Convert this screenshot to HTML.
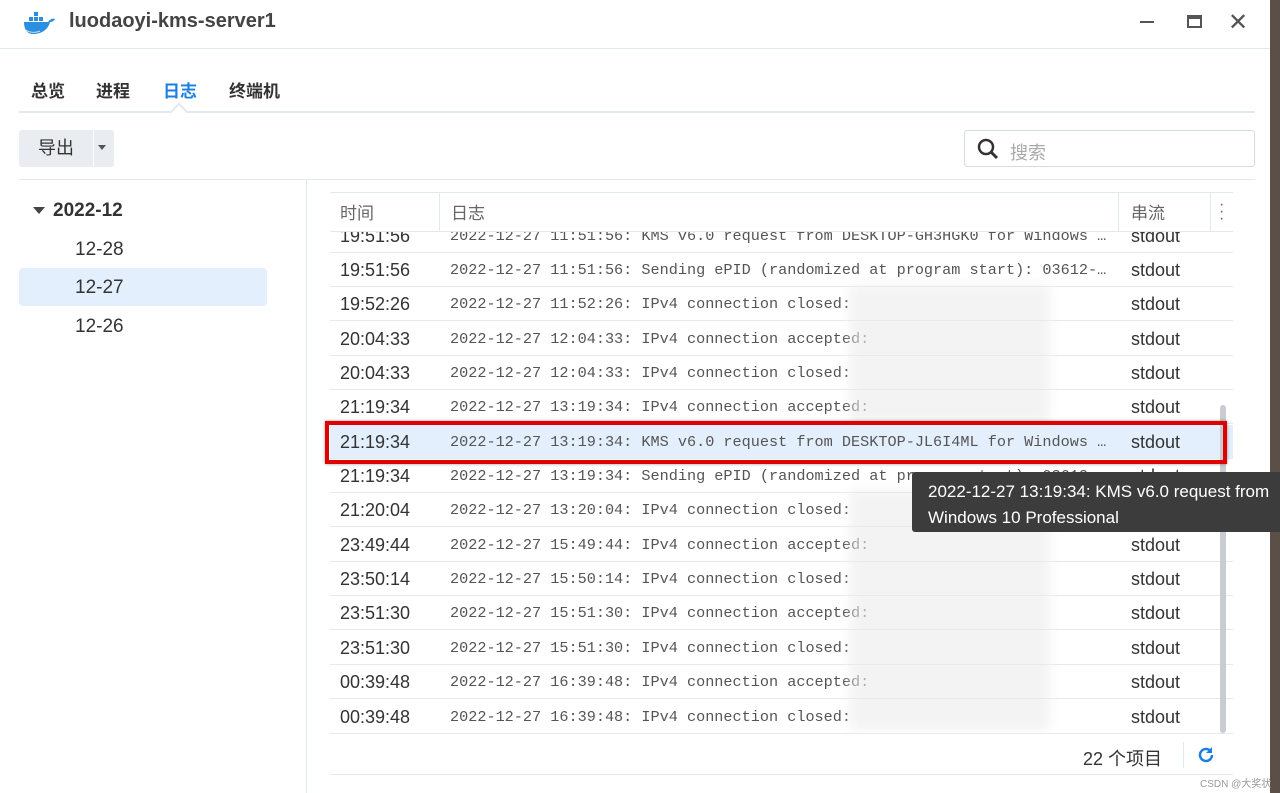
<!DOCTYPE html>
<html><head><meta charset="utf-8"><style>
*{margin:0;padding:0;box-sizing:border-box}
body{width:1280px;height:793px;overflow:hidden;background:#fff;font-family:"Liberation Sans","Noto Sans CJK SC",sans-serif;position:relative}
.abs{position:absolute}
.row{position:absolute;left:330px;width:903px;height:34px;border-bottom:1px solid #e6e9ee}
.row .tm{position:absolute;left:10px;top:7px;font-size:18px;color:#333}
.row .lg{position:absolute;left:120px;top:8px;font-family:"Liberation Mono","Noto Serif CJK SC",monospace;font-size:15.2px;color:#555;white-space:nowrap}
.row .so{position:absolute;left:801px;top:7px;font-size:18px;color:#333}
.blur{position:absolute;background:#ececec;filter:blur(5px);opacity:.6}
</style></head><body>
<div class="abs" style="right:0;top:0;width:10px;height:793px;background:#5a5048"></div>
<svg class="abs" style="left:22px;top:10px" width="34" height="26" viewBox="0 0 34 26"><path d="M2 12h24c2-3 5-4 7-3-1 2-3 3-5 3-2 8-9 12-17 12C5 24 2 19 2 12z" fill="#2a8fe0"/><rect x="7" y="7" width="4" height="4" fill="#2a8fe0"/><rect x="12" y="7" width="4" height="4" fill="#2a8fe0"/><rect x="17" y="7" width="4" height="4" fill="#2a8fe0"/><rect x="12" y="2" width="4" height="4" fill="#2a8fe0"/><path d="M4 20c4 3 10 3 14 1" stroke="#cde" fill="none"/></svg>
<div class="abs" style="left:69px;top:10px;font-size:20px;font-weight:bold;color:#444">luodaoyi-kms-server1</div>
<div class="abs" style="left:1140px;top:21px;width:14px;height:2px;background:#555"></div>
<div class="abs" style="left:1187px;top:15px;width:15px;height:13px;border:2px solid #555;border-top-width:4px"></div>
<div class="abs" style="left:1228px;top:8px;font-size:24px;color:#555">✕</div>
<div class="abs" style="left:0;top:48px;width:1270px;height:1px;background:#e3e8ee"></div>
<div class="abs" style="left:31px;top:77px;font-size:17px;font-weight:bold;color:#333">总览</div>
<div class="abs" style="left:96px;top:77px;font-size:17px;font-weight:bold;color:#333">进程</div>
<div class="abs" style="left:163px;top:77px;font-size:17px;font-weight:bold;color:#1a7fe0">日志</div>
<div class="abs" style="left:229px;top:77px;font-size:17px;font-weight:bold;color:#333">终端机</div>
<div class="abs" style="left:19px;top:111px;width:1236px;height:2px;background:#e3e8ee"></div>
<div class="abs" style="left:173px;top:105px;width:12px;height:12px;background:#fff;border-left:2px solid #e3e8ee;border-top:2px solid #e3e8ee;transform:rotate(45deg)"></div>
<div class="abs" style="left:19px;top:130px;width:74px;height:37px;background:#e9edf2;border-radius:3px 0 0 3px;font-size:18px;color:#333;text-align:center;line-height:37px">导出</div>
<div class="abs" style="left:94px;top:130px;width:20px;height:37px;background:#e9edf2;border-radius:0 3px 3px 0"></div>
<div class="abs" style="left:98px;top:145px;border:4px solid transparent;border-top:5px solid #555"></div>
<div class="abs" style="left:964px;top:130px;width:291px;height:37px;border:1px solid #d5dbe2;border-radius:3px"></div>
<svg class="abs" style="left:977px;top:138px" width="22" height="22"><circle cx="9" cy="9" r="7" stroke="#333" stroke-width="2.5" fill="none"/><path d="M14 14l6 6" stroke="#333" stroke-width="3"/></svg>
<div class="abs" style="left:1010px;top:139px;font-size:18px;color:#aaa">搜索</div>
<div class="abs" style="left:19px;top:179px;width:1236px;height:1px;background:#e3e8ee"></div>
<div class="abs" style="left:306px;top:180px;width:1px;height:613px;background:#e3e8ee"></div>
<div class="abs" style="left:33px;top:207px;border:6px solid transparent;border-top:7px solid #444"></div>
<div class="abs" style="left:53px;top:200px;font-size:19px;font-weight:bold;color:#333">2022-12</div>
<div class="abs" style="left:75px;top:239px;font-size:19px;color:#333">12-28</div>
<div class="abs" style="left:19px;top:268px;width:248px;height:38px;background:#e3effc;border-radius:4px"></div>
<div class="abs" style="left:75px;top:277px;font-size:19px;color:#333">12-27</div>
<div class="abs" style="left:75px;top:316px;font-size:19px;color:#333">12-26</div>
<div class="abs" style="left:330px;top:192px;width:903px;height:1px;background:#e3e8ee"></div>
<div class="abs" style="left:330px;top:232px;width:903px;height:503px;overflow:hidden">
<div style="position:absolute;left:-330px;top:-232px;width:1280px;height:800px">
<div class="row" style="top:219px"><span class="tm">19:51:56</span><span class="lg">2022-12-27 11:51:56: KMS v6.0 request from DESKTOP-GH3HGK0 for Windows …</span><span class="so">stdout</span></div>
<div class="row" style="top:253px"><span class="tm">19:51:56</span><span class="lg">2022-12-27 11:51:56: Sending ePID (randomized at program start): 03612-…</span><span class="so">stdout</span></div>
<div class="row" style="top:287px"><span class="tm">19:52:26</span><span class="lg">2022-12-27 11:52:26: IPv4 connection closed:</span><span class="so">stdout</span></div>
<div class="row" style="top:322px"><span class="tm">20:04:33</span><span class="lg">2022-12-27 12:04:33: IPv4 connection accepted:</span><span class="so">stdout</span></div>
<div class="row" style="top:356px"><span class="tm">20:04:33</span><span class="lg">2022-12-27 12:04:33: IPv4 connection closed:</span><span class="so">stdout</span></div>
<div class="row" style="top:390px"><span class="tm">21:19:34</span><span class="lg">2022-12-27 13:19:34: IPv4 connection accepted:</span><span class="so">stdout</span></div>
<div class="row" style="top:425px;background:#e3effc"><span class="tm">21:19:34</span><span class="lg">2022-12-27 13:19:34: KMS v6.0 request from DESKTOP-JL6I4ML for Windows …</span><span class="so">stdout</span></div>
<div class="row" style="top:459px"><span class="tm">21:19:34</span><span class="lg">2022-12-27 13:19:34: Sending ePID (randomized at program start): 03612-…</span><span class="so">stdout</span></div>
<div class="row" style="top:493px"><span class="tm">21:20:04</span><span class="lg">2022-12-27 13:20:04: IPv4 connection closed:</span><span class="so">stdout</span></div>
<div class="row" style="top:528px"><span class="tm">23:49:44</span><span class="lg">2022-12-27 15:49:44: IPv4 connection accepted:</span><span class="so">stdout</span></div>
<div class="row" style="top:562px"><span class="tm">23:50:14</span><span class="lg">2022-12-27 15:50:14: IPv4 connection closed:</span><span class="so">stdout</span></div>
<div class="row" style="top:596px"><span class="tm">23:51:30</span><span class="lg">2022-12-27 15:51:30: IPv4 connection accepted:</span><span class="so">stdout</span></div>
<div class="row" style="top:631px"><span class="tm">23:51:30</span><span class="lg">2022-12-27 15:51:30: IPv4 connection closed:</span><span class="so">stdout</span></div>
<div class="row" style="top:665px"><span class="tm">00:39:48</span><span class="lg">2022-12-27 16:39:48: IPv4 connection accepted:</span><span class="so">stdout</span></div>
<div class="row" style="top:700px"><span class="tm">00:39:48</span><span class="lg">2022-12-27 16:39:48: IPv4 connection closed:</span><span class="so">stdout</span></div>
<div class="blur" style="left:850px;top:285px;width:200px;height:140px"></div>
<div class="blur" style="left:850px;top:490px;width:200px;height:240px"></div>
</div></div>
<div class="abs" style="left:330px;top:193px;width:903px;height:39px;background:#fff;border-bottom:1px solid #e3e8ee"></div>
<div class="abs" style="left:340px;top:199px;font-size:17px;color:#666">时间</div>
<div class="abs" style="left:439px;top:193px;width:1px;height:39px;background:#e3e8ee"></div>
<div class="abs" style="left:451px;top:199px;font-size:17px;color:#666">日志</div>
<div class="abs" style="left:1118px;top:193px;width:1px;height:39px;background:#e3e8ee"></div>
<div class="abs" style="left:1131px;top:199px;font-size:17px;color:#666">串流</div>
<div class="abs" style="left:1210px;top:193px;width:1px;height:39px;background:#e3e8ee"></div>
<div class="abs" style="left:1219px;top:201px;font-size:16px;color:#666;line-height:7px">·<br>·<br>·</div>
<div class="abs" style="left:1220px;top:405px;width:6px;height:328px;background:#c9cdd2;border-radius:3px"></div>
<div class="abs" style="left:325px;top:421px;width:902px;height:43px;border:4px solid #e00000;box-shadow:0 0 3px rgba(0,0,0,.4)"></div>
<div class="abs" style="left:912px;top:472px;width:370px;height:60px;background:#3c3c3c;border-radius:3px;color:#fff;font-size:17px;padding:7px 0 0 16px;line-height:26px;white-space:nowrap;overflow:hidden">2022-12-27 13:19:34: KMS v6.0 request from<br>Windows 10 Professional</div>
<div class="abs" style="left:330px;top:774px;width:903px;height:1px;background:#e3e8ee"></div>
<div class="abs" style="left:1083px;top:745px;font-size:18px;color:#333">22 个项目</div>
<div class="abs" style="left:1183px;top:742px;width:1px;height:26px;background:#e3e8ee"></div>
<svg class="abs" style="left:1196px;top:745px" width="20" height="20"><path d="M16 10a6 6 0 1 1-2-4.5" stroke="#1a7fe0" stroke-width="2.5" fill="none"/><path d="M16 2v6h-6z" fill="#1a7fe0"/></svg>
<div class="abs" style="left:1200px;top:775px;font-size:10px;color:#999">CSDN @大奖状</div>
</body></html>
